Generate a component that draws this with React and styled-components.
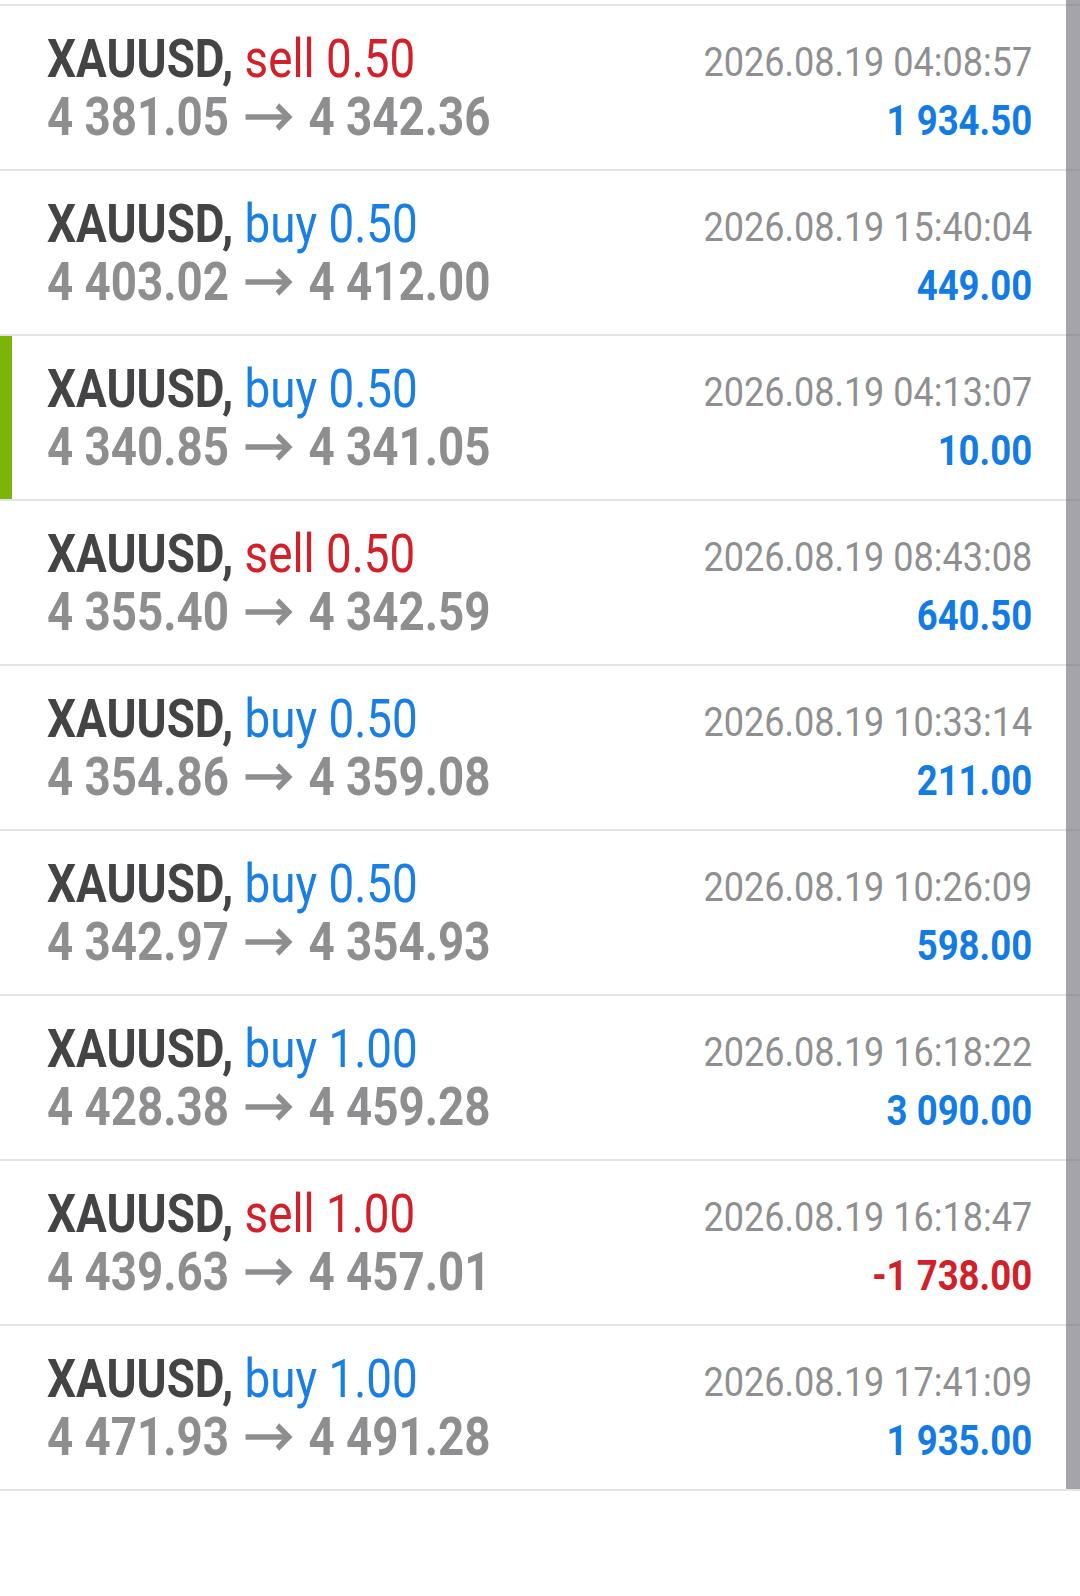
import React from 'react'
import styled, { createGlobalStyle } from 'styled-components'

const trades = [
  { side: 'sell', volume: '0.50', open: '4 381.05', close: '4 342.36', time: '2026.08.19 04:08:57', profit: '1 934.50' },
  { side: 'buy', volume: '0.50', open: '4 403.02', close: '4 412.00', time: '2026.08.19 15:40:04', profit: '449.00' },
  { side: 'buy', volume: '0.50', open: '4 340.85', close: '4 341.05', time: '2026.08.19 04:13:07', profit: '10.00', active: true },
  { side: 'sell', volume: '0.50', open: '4 355.40', close: '4 342.59', time: '2026.08.19 08:43:08', profit: '640.50' },
  { side: 'buy', volume: '0.50', open: '4 354.86', close: '4 359.08', time: '2026.08.19 10:33:14', profit: '211.00' },
  { side: 'buy', volume: '0.50', open: '4 342.97', close: '4 354.93', time: '2026.08.19 10:26:09', profit: '598.00' },
  { side: 'buy', volume: '1.00', open: '4 428.38', close: '4 459.28', time: '2026.08.19 16:18:22', profit: '3 090.00' },
  { side: 'sell', volume: '1.00', open: '4 439.63', close: '4 457.01', time: '2026.08.19 16:18:47', profit: '-1 738.00' },
  { side: 'buy', volume: '1.00', open: '4 471.93', close: '4 491.28', time: '2026.08.19 17:41:09', profit: '1 935.00' },
]

// arrow between open and close price
const Arrow = () => (
  <ArrowSvg viewBox="0 0 56 30" width="56" height="30">
    <path d="M0 15H48" stroke="currentColor" strokeWidth="5.5" fill="none" />
    <path d="M37 3.5L50 15L37 26.5" stroke="currentColor" strokeWidth="6" fill="none" strokeLinejoin="miter" />
  </ArrowSvg>
)

const App = () => {
  return (
    <>
      <GlobalStyle />
      <Page>
        <List>
          {trades.map((trade, i) => (
            <Row key={i} $active={trade.active}>
              <Left>
                <Title>
                  <Symbol>XAUUSD,</Symbol>{' '}
                  <Side $side={trade.side}>{trade.side} {trade.volume}</Side>
                </Title>
                <Prices>
                  {trade.open}
                  <Arrow />
                  {trade.close}
                </Prices>
              </Left>
              <Right>
                <Time>{trade.time}</Time>
                <Profit $loss={trade.profit.startsWith('-')}>{trade.profit}</Profit>
              </Right>
            </Row>
          ))}
        </List>
        <ScrollThumb />
      </Page>
    </>
  )
}

export default App

const GlobalStyle = createGlobalStyle`
  body {
    margin: 0;
    background: #fff;
    font-family: Roboto, "Noto Sans", sans-serif;
  }
`

const Page = styled.div`
  position: relative;
  width: 1080px;
  height: 1596px;
  padding-top: 4px;
  box-sizing: border-box;
  overflow: hidden;
`

const List = styled.div`
  border-bottom: 2px solid #e4e4e4;
`

const Row = styled.div`
  display: flex;
  justify-content: space-between;
  height: 163px;
  border-top: 2px solid #e4e4e4;
  box-shadow: ${p => (p.$active ? 'inset 12px 0 0 #7db408' : 'none')};
`

const Left = styled.div`
  padding: 24px 0 0 47px;
`

const Right = styled.div`
  padding: 28px 48px 0 0;
  text-align: right;
`

const Line = styled.div`
  white-space: nowrap;
  transform: scaleX(0.863);
`

const Title = styled(Line)`
  font-size: 53px;
  line-height: 58px;
  transform-origin: left center;
`

const Symbol = styled.span`
  font-weight: 700;
  color: #444446;
`

const Side = styled.span`
  font-weight: 400;
  color: ${p => (p.$side === 'sell' ? '#d2202a' : '#1a7fe3')};
`

const Prices = styled(Line)`
  font-size: 53px;
  line-height: 58px;
  font-weight: 700;
  color: #8e8e90;
  transform-origin: left center;
`

const ArrowSvg = styled.svg`
  display: inline-block;
  vertical-align: 3px;
  margin: 0 17px 0 19px;
  overflow: visible;
`

const Time = styled(Line)`
  font-size: 40px;
  line-height: 58px;
  color: #8f8f91;
  transform: scaleX(0.9);
  transform-origin: right center;
`

const Profit = styled(Line)`
  font-size: 43px;
  line-height: 56px;
  font-weight: 700;
  color: ${p => (p.$loss ? '#d2202a' : '#127be4')};
  transform: scaleX(0.85);
  transform-origin: right center;
`

const ScrollThumb = styled.div`
  position: absolute;
  top: 0;
  right: 0;
  width: 14px;
  height: 1489px;
  background: rgba(110, 108, 118, 0.62);
`
